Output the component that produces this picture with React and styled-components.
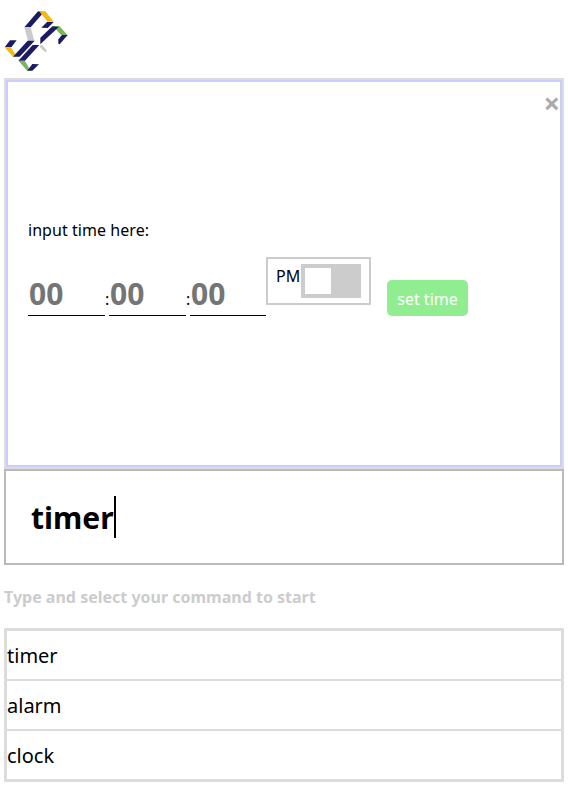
import React from "react";
import styled, { createGlobalStyle } from "styled-components";

const GlobalStyle = createGlobalStyle`
  * { box-sizing: border-box; }
  body {
    margin: 0;
    background: #fff;
    color: #000;
    font: 16px/22px "Noto Sans", sans-serif;
  }
`;

const Page = styled.main`
  display: flex;
  flex-direction: column;
  padding: 0 4px;
`;

const Header = styled.header`
  height: 78px;
  padding-top: 4px;
`;

const Logo = styled.svg`
  display: block;
  width: 72px;
  height: 70px;
`;

const Frame = styled.section`
  height: 391px;
  border: 2px solid #dcdcdc;
`;

const Panel = styled.div`
  height: 100%;
  border: 2px solid #ccccff;
  display: flex;
  flex-direction: column;
`;

const CloseButton = styled.button`
  align-self: flex-end;
  height: 38px;
  margin: 4px 0 0;
  padding: 0;
  border: 0;
  background: none;
  color: #aaa;
  font: bold 29px/34px "Noto Sans", sans-serif;
  display: flex;
  align-items: flex-start;
  cursor: pointer;
`;

const Label = styled.div`
  margin: 95px 0 0 20px;
  letter-spacing: 0.05px;
`;

const TimeRow = styled.form`
  display: flex;
  align-items: flex-start;
  margin: 16px 0 0 20px;
`;

const TimeInput = styled.input`
  width: ${({ $width }) => $width}px;
  height: 43px;
  margin-top: 16px;
  padding: 0 1px 2px;
  border: 0;
  border-bottom: 1px solid #000;
  border-radius: 0;
  outline: 0;
  background: none;
  font: bold 30px "Noto Sans", sans-serif;
  &::placeholder { color: #757575; }
`;

const Colon = styled.span`
  width: 4px;
  margin-top: 31px;
`;

const Meridiem = styled.div`
  display: flex;
  width: 105px;
  height: 48px;
  padding: 5px 8px;
  border: 2px solid #ccc;
`;

const MeridiemText = styled.span`
  width: 25px;
  margin-top: 1px;
`;

const Switch = styled.span`
  width: 60px;
  height: 34px;
  padding: 4px;
  background: #ccc;
`;

const Knob = styled.span`
  display: block;
  width: 26px;
  height: 26px;
  background: #fff;
`;

const SetButton = styled.button`
  width: 81px;
  height: 36px;
  margin: 23px 0 0 16px;
  padding: 2px 0 0;
  border: 0;
  border-radius: 5px;
  background: #90ee90;
  color: #fff;
  font: 16px/22px "Noto Sans", sans-serif;
`;

const CommandBox = styled.div`
  display: flex;
  align-items: center;
  height: 96px;
  padding-left: 25px;
  border: 2px solid #bababa;
  font-size: 30px;
  line-height: 42px;
  font-weight: bold;
`;

const CommandText = styled.span`
  padding-top: 2px;
`;

const Caret = styled.span`
  width: 2px;
  height: 42px;
  background: #000;
`;

const Hint = styled.p`
  margin: 21px 0 20px;
  color: #ccc;
  font-weight: bold;
`;

const CommandList = styled.ul`
  margin: 0;
  padding: 0;
  list-style: none;
  border: 3px solid #dcdcdc;
`;

const Command = styled.li`
  height: 48px;
  padding-top: 1px;
  font-size: 20px;
  line-height: 48px;
  & + & {
    height: 50px;
    border-top: 2px solid #dcdcdc;
  }
`;

const navy = "#1b1a64";
const gold = "#f5b811";
const green = "#78b75b";
const grey = "#cbcbcb";

const logoPieces = [
  [navy, "114,22 132,24 92,70 73,70"],
  [gold, "117,21 136,22 161,53 143,53"],
  [navy, "141,54 161,54 143,72 124,71"],
  [grey, "73,70 92,70 103,110 84,111"],
  [green, "159,66 178,66 203,94 186,96"],
  [navy, "186,93 203,93 179,121 175,119 175,106"],
  [navy, "157,67 176,69 121,121 121,101"],
  [grey, "120,123 128,124 141,140 136,145 120,130"],
  [navy, "30,109 50,109 34,130 14,130"],
  [gold, "15,131 33,131 50,157 39,158"],
  [navy, "83,110 104,110 59,158 39,158"],
  [navy, "98,123 118,123 75,170 55,170"],
  [green, "56,171 75,171 92,200 82,201"],
  [navy, "97,180 117,181 97,200 82,200"],
];

const commands = ["timer", "alarm", "clock"];

export default function App() {
  return (
    <>
      <GlobalStyle />
      <Page>
        <Header>
          <Logo viewBox="12 0 216 210" aria-hidden="true">
            {logoPieces.map(([fill, points]) => (
              <polygon key={points} fill={fill} points={points} />
            ))}
          </Logo>
        </Header>
        <Frame>
          <Panel>
            <CloseButton aria-label="close">×</CloseButton>
            <Label>input time here:</Label>
            <TimeRow>
              <TimeInput $width={77} placeholder="00" aria-label="hours" />
              <Colon>:</Colon>
              <TimeInput $width={77} placeholder="00" aria-label="minutes" />
              <Colon>:</Colon>
              <TimeInput $width={76} placeholder="00" aria-label="seconds" />
              <Meridiem>
                <MeridiemText>PM</MeridiemText>
                <Switch><Knob /></Switch>
              </Meridiem>
              <SetButton type="button">set time</SetButton>
            </TimeRow>
          </Panel>
        </Frame>
        <CommandBox>
          <CommandText>timer</CommandText>
          <Caret />
        </CommandBox>
        <Hint>Type and select your command to start</Hint>
        <CommandList>
          {commands.map((name) => <Command key={name}>{name}</Command>)}
        </CommandList>
      </Page>
    </>
  );
}
